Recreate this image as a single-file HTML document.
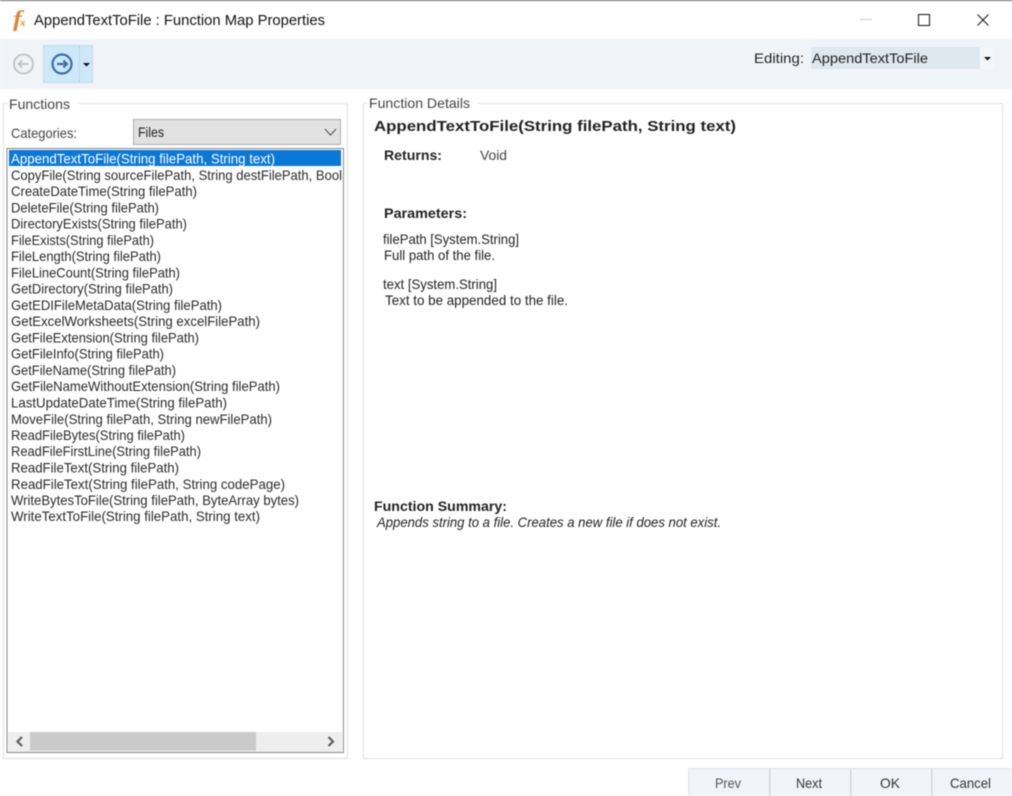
<!DOCTYPE html>
<html><head><meta charset="utf-8"><style>
html,body{margin:0;padding:0;width:1012px;height:796px;overflow:hidden;background:#fff}
svg{display:block;filter:blur(.45px)}
text{font-family:"Liberation Sans",sans-serif;font-size:14px;fill:#222}
.l text{fill:#2a2a2a}
</style></head><body>
<svg width="1012" height="796" viewBox="0 0 1012 796" xmlns="http://www.w3.org/2000/svg">
<defs><clipPath id="c"><rect x="8" y="150" width="334" height="580"/></clipPath></defs>
<rect width="1012" height="796" fill="#fff"/>
<rect width="1012" height="1" fill="#666"/>
<!-- title -->
<text x="13" y="26" style="font-family:'Liberation Serif',serif;font-style:italic;font-weight:bold;font-size:23px;fill:#d98a35" textLength="9" lengthAdjust="spacingAndGlyphs">f</text>
<text x="20" y="26" style="font-family:'Liberation Serif',serif;font-style:italic;font-weight:bold;font-size:11px;fill:#d98a35">x</text>
<text x="34" y="25" style="font-size:14.5px;fill:#111" textLength="291" lengthAdjust="spacingAndGlyphs">AppendTextToFile : Function Map Properties</text>
<rect x="860" y="19" width="12" height="1" fill="#ccc"/>
<rect x="918.500" y="14.500" width="11" height="11" fill="none" stroke="#111"/>
<path d="M977.500 14.500L988.500 25.500M988.500 14.500L977.500 25.500" stroke="#111" fill="none"/>
<!-- toolbar -->
<rect x="0" y="39" width="1012" height="50" fill="#f0f4f8"/>
<circle cx="23.500" cy="64" r="9.500" fill="none" stroke="#c4c4c4" stroke-width="2"/>
<path d="M28.500 64H18.500M22 60.500L18.500 64L22 67.500" fill="none" stroke="#c4c4c4" stroke-width="2"/>
<rect x="43.500" y="45.500" width="49" height="37" fill="#cce8f9" stroke="#c4dcec"/>
<rect x="79" y="46" width="1" height="36" fill="#b9d6e8"/>
<circle cx="62" cy="64" r="9.500" fill="none" stroke="#3d6ea5" stroke-width="2.200"/>
<path d="M57 64H67M63.500 60.500L67 64L63.500 67.500" fill="none" stroke="#3d6ea5" stroke-width="2.200"/>
<path d="M83 63H90L86.500 66.500Z" fill="#111"/>
<text x="754" y="63" textLength="50" lengthAdjust="spacingAndGlyphs">Editing:</text>
<rect x="811" y="47" width="184" height="22" fill="#f4f7fa"/>
<rect x="811" y="47" width="169" height="22" fill="#dfe7ef"/>
<text x="812" y="63" textLength="116" lengthAdjust="spacingAndGlyphs">AppendTextToFile</text>
<path d="M984 57H991L987.500 60.500Z" fill="#111"/>
<!-- functions group -->
<path d="M8 103.500H3.500V758.500H347.500V103.500H78" fill="none" stroke="#e0e0e6"/>
<text x="9" y="109" style="fill:#444" textLength="61" lengthAdjust="spacingAndGlyphs">Functions</text>
<text x="11" y="138" style="fill:#444" textLength="66" lengthAdjust="spacingAndGlyphs">Categories:</text>
<rect x="133.500" y="119.500" width="207" height="25" fill="#e1e1e1" stroke="#adadad"/>
<text x="138" y="137" textLength="26" lengthAdjust="spacingAndGlyphs">Files</text>
<path d="M325 129L330.500 135L336 129" fill="none" stroke="#555" stroke-width="1.100"/>
<!-- list -->
<rect x="7" y="148.500" width="336.500" height="604" fill="#fff" stroke="#888" stroke-width="1"/>
<rect x="9" y="150" width="332" height="16" fill="#0a78d7"/>
<g class="l" clip-path="url(#c)">
<text x="11" y="163.500" style="fill:#fff" textLength="264" lengthAdjust="spacingAndGlyphs">AppendTextToFile(String filePath, String text)</text>
<text x="11" y="180" textLength="331" lengthAdjust="spacingAndGlyphs">CopyFile(String sourceFilePath, String destFilePath, Bool</text>
<text x="11" y="196" textLength="186" lengthAdjust="spacingAndGlyphs">CreateDateTime(String filePath)</text>
<text x="11" y="212.500" textLength="148" lengthAdjust="spacingAndGlyphs">DeleteFile(String filePath)</text>
<text x="11" y="228.500" textLength="176" lengthAdjust="spacingAndGlyphs">DirectoryExists(String filePath)</text>
<text x="11" y="245" textLength="143" lengthAdjust="spacingAndGlyphs">FileExists(String filePath)</text>
<text x="11" y="261" textLength="150" lengthAdjust="spacingAndGlyphs">FileLength(String filePath)</text>
<text x="11" y="277.500" textLength="169" lengthAdjust="spacingAndGlyphs">FileLineCount(String filePath)</text>
<text x="11" y="293.500" textLength="162" lengthAdjust="spacingAndGlyphs">GetDirectory(String filePath)</text>
<text x="11" y="310" textLength="211" lengthAdjust="spacingAndGlyphs">GetEDIFileMetaData(String filePath)</text>
<text x="11" y="326" textLength="249" lengthAdjust="spacingAndGlyphs">GetExcelWorksheets(String excelFilePath)</text>
<text x="11" y="342.500" textLength="188" lengthAdjust="spacingAndGlyphs">GetFileExtension(String filePath)</text>
<text x="11" y="358.500" textLength="153" lengthAdjust="spacingAndGlyphs">GetFileInfo(String filePath)</text>
<text x="11" y="375" textLength="165" lengthAdjust="spacingAndGlyphs">GetFileName(String filePath)</text>
<text x="11" y="391" textLength="269" lengthAdjust="spacingAndGlyphs">GetFileNameWithoutExtension(String filePath)</text>
<text x="11" y="407.500" textLength="216" lengthAdjust="spacingAndGlyphs">LastUpdateDateTime(String filePath)</text>
<text x="11" y="424" textLength="261" lengthAdjust="spacingAndGlyphs">MoveFile(String filePath, String newFilePath)</text>
<text x="11" y="440" textLength="174" lengthAdjust="spacingAndGlyphs">ReadFileBytes(String filePath)</text>
<text x="11" y="456" textLength="190" lengthAdjust="spacingAndGlyphs">ReadFileFirstLine(String filePath)</text>
<text x="11" y="472.500" textLength="168" lengthAdjust="spacingAndGlyphs">ReadFileText(String filePath)</text>
<text x="11" y="489" textLength="274" lengthAdjust="spacingAndGlyphs">ReadFileText(String filePath, String codePage)</text>
<text x="11" y="505" textLength="288" lengthAdjust="spacingAndGlyphs">WriteBytesToFile(String filePath, ByteArray bytes)</text>
<text x="11" y="521" textLength="249" lengthAdjust="spacingAndGlyphs">WriteTextToFile(String filePath, String text)</text>
</g>
<!-- scrollbar -->
<rect x="8" y="732" width="334" height="20" fill="#eeeeee"/>
<rect x="30" y="732" width="226" height="18.500" fill="#cacaca"/>
<path d="M22 737L17.500 741.500L22 746" fill="none" stroke="#606060" stroke-width="2.200"/>
<path d="M328.500 737L333 741.500L328.500 746" fill="none" stroke="#606060" stroke-width="2.200"/>
<!-- details group -->
<path d="M367 103.500H363.500V758.500H1002.500V103.500H478" fill="none" stroke="#e0e0e6"/>
<text x="369" y="108" style="fill:#444" textLength="101" lengthAdjust="spacingAndGlyphs">Function Details</text>
<text x="374" y="131" style="font-weight:bold;font-size:14.5px" textLength="362" lengthAdjust="spacingAndGlyphs">AppendTextToFile(String filePath, String text)</text>
<text x="384" y="160" style="font-weight:bold" textLength="58" lengthAdjust="spacingAndGlyphs">Returns:</text>
<text x="480" y="160" style="fill:#444" textLength="27" lengthAdjust="spacingAndGlyphs">Void</text>
<text x="384" y="218" style="font-weight:bold" textLength="83" lengthAdjust="spacingAndGlyphs">Parameters:</text>
<text x="383" y="244" textLength="136" lengthAdjust="spacingAndGlyphs">filePath [System.String]</text>
<text x="384" y="260" textLength="111" lengthAdjust="spacingAndGlyphs">Full path of the file.</text>
<text x="383" y="289" textLength="114" lengthAdjust="spacingAndGlyphs">text [System.String]</text>
<text x="385" y="305" textLength="183" lengthAdjust="spacingAndGlyphs">Text to be appended to the file.</text>
<text x="374" y="511" style="font-weight:bold" textLength="133" lengthAdjust="spacingAndGlyphs">Function Summary:</text>
<text x="377" y="527" style="font-style:italic" textLength="344" lengthAdjust="spacingAndGlyphs">Appends string to a file. Creates a new file if does not exist.</text>
<!-- buttons -->
<rect x="688" y="769" width="324" height="27" fill="#f0f4f8"/>
<rect x="688" y="768" width="324" height="1" fill="#dfe3e8"/>
<rect x="688" y="769" width="1" height="27" fill="#dfe3e8"/>
<rect x="769" y="769" width="1.500" height="27" fill="#d4d8dd"/>
<rect x="850" y="769" width="1.500" height="27" fill="#d4d8dd"/>
<rect x="931" y="769" width="1.500" height="27" fill="#d4d8dd"/>
<text x="715" y="788" style="fill:#555" textLength="26" lengthAdjust="spacingAndGlyphs">Prev</text>
<text x="796" y="788" style="fill:#333" textLength="26" lengthAdjust="spacingAndGlyphs">Next</text>
<text x="880" y="788" style="fill:#333" textLength="20" lengthAdjust="spacingAndGlyphs">OK</text>
<text x="950" y="788" style="fill:#333" textLength="41" lengthAdjust="spacingAndGlyphs">Cancel</text>
</svg>
</body></html>
